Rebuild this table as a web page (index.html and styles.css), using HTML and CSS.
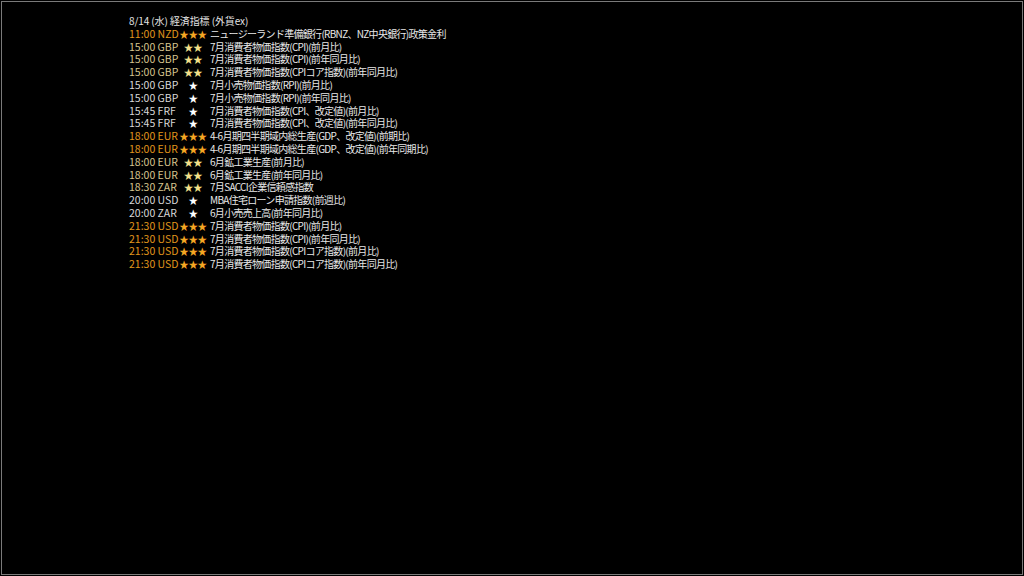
FILE: index.html
```html
<!DOCTYPE html>
<html lang="ja">
<head>
<meta charset="utf-8">
<link rel="stylesheet" href="styles.css">
</head>
<body>
<div class="frame">
  <div class="list">
    <div class="header">8/14 (水) 経済指標 (外貨ex)</div>
    <div class="row r3"><span class="t">11:00 NZD</span><span class="s">★★★</span><span class="d">ニュージーランド準備銀行(RBNZ、NZ中央銀行)政策金利</span></div>
    <div class="row r2"><span class="t">15:00 GBP</span><span class="s">★★</span><span class="d">7月消費者物価指数(CPI)(前月比)</span></div>
    <div class="row r2"><span class="t">15:00 GBP</span><span class="s">★★</span><span class="d">7月消費者物価指数(CPI)(前年同月比)</span></div>
    <div class="row r2"><span class="t">15:00 GBP</span><span class="s">★★</span><span class="d">7月消費者物価指数(CPIコア指数)(前年同月比)</span></div>
    <div class="row r1"><span class="t">15:00 GBP</span><span class="s">★</span><span class="d">7月小売物価指数(RPI)(前月比)</span></div>
    <div class="row r1"><span class="t">15:00 GBP</span><span class="s">★</span><span class="d">7月小売物価指数(RPI)(前年同月比)</span></div>
    <div class="row r1"><span class="t">15:45 FRF</span><span class="s">★</span><span class="d">7月消費者物価指数(CPI、改定値)(前月比)</span></div>
    <div class="row r1"><span class="t">15:45 FRF</span><span class="s">★</span><span class="d">7月消費者物価指数(CPI、改定値)(前年同月比)</span></div>
    <div class="row r3"><span class="t">18:00 EUR</span><span class="s">★★★</span><span class="d">4-6月期四半期域内総生産(GDP、改定値)(前期比)</span></div>
    <div class="row r3"><span class="t">18:00 EUR</span><span class="s">★★★</span><span class="d">4-6月期四半期域内総生産(GDP、改定値)(前年同期比)</span></div>
    <div class="row r2"><span class="t">18:00 EUR</span><span class="s">★★</span><span class="d">6月鉱工業生産(前月比)</span></div>
    <div class="row r2"><span class="t">18:00 EUR</span><span class="s">★★</span><span class="d">6月鉱工業生産(前年同月比)</span></div>
    <div class="row r2"><span class="t">18:30 ZAR</span><span class="s">★★</span><span class="d">7月SACCI企業信頼感指数</span></div>
    <div class="row r1"><span class="t">20:00 USD</span><span class="s">★</span><span class="d">MBA住宅ローン申請指数(前週比)</span></div>
    <div class="row r1"><span class="t">20:00 ZAR</span><span class="s">★</span><span class="d">6月小売売上高(前年同月比)</span></div>
    <div class="row r3"><span class="t">21:30 USD</span><span class="s">★★★</span><span class="d">7月消費者物価指数(CPI)(前月比)</span></div>
    <div class="row r3"><span class="t">21:30 USD</span><span class="s">★★★</span><span class="d">7月消費者物価指数(CPI)(前年同月比)</span></div>
    <div class="row r3"><span class="t">21:30 USD</span><span class="s">★★★</span><span class="d">7月消費者物価指数(CPIコア指数)(前月比)</span></div>
    <div class="row r3"><span class="t">21:30 USD</span><span class="s">★★★</span><span class="d">7月消費者物価指数(CPIコア指数)(前年同月比)</span></div>
  </div>
</div>
</body>
</html>
```
FILE: styles.css
```css
html, body {
  margin: 0;
  padding: 0;
  background: #000;
}
body {
  padding: 1px;
  width: 1024px;
  height: 576px;
  box-sizing: border-box;
  overflow: hidden;
}
.frame {
  box-sizing: border-box;
  height: 574px;
  border: 1px solid #7a7a7a;
  padding: 13px 0 0 127px;
  font-family: "Noto Sans CJK JP", "Noto Sans", sans-serif;
  font-size: 10.5px;
  color: #e4e4e4;
}
.list {
  display: flex;
  flex-direction: column;
}
.header,
.row {
  height: 12.8px;
  line-height: 12.8px;
  white-space: nowrap;
}
.header {
  font-size: 10px;
  letter-spacing: -0.1px;
}
.row {
  display: grid;
  grid-template-columns: 50px 28px auto;
  column-gap: 0;
}
.s {
  text-align: center;
  font-size: 9.5px;
  letter-spacing: -0.3px;
}
.d {
  padding-left: 3px;
  font-size: 10px;
  letter-spacing: -0.7px;
  color: #e8e8e8;
}
.r3 .t { color: #e0961c; }
.r3 .s { color: #f5a623; }
.r2 .t { color: #d6c48e; }
.r2 .s { color: #f3e08a; }
.r1 .t { color: #d8d8d8; }
.r1 .s { color: #ffffff; }
```
